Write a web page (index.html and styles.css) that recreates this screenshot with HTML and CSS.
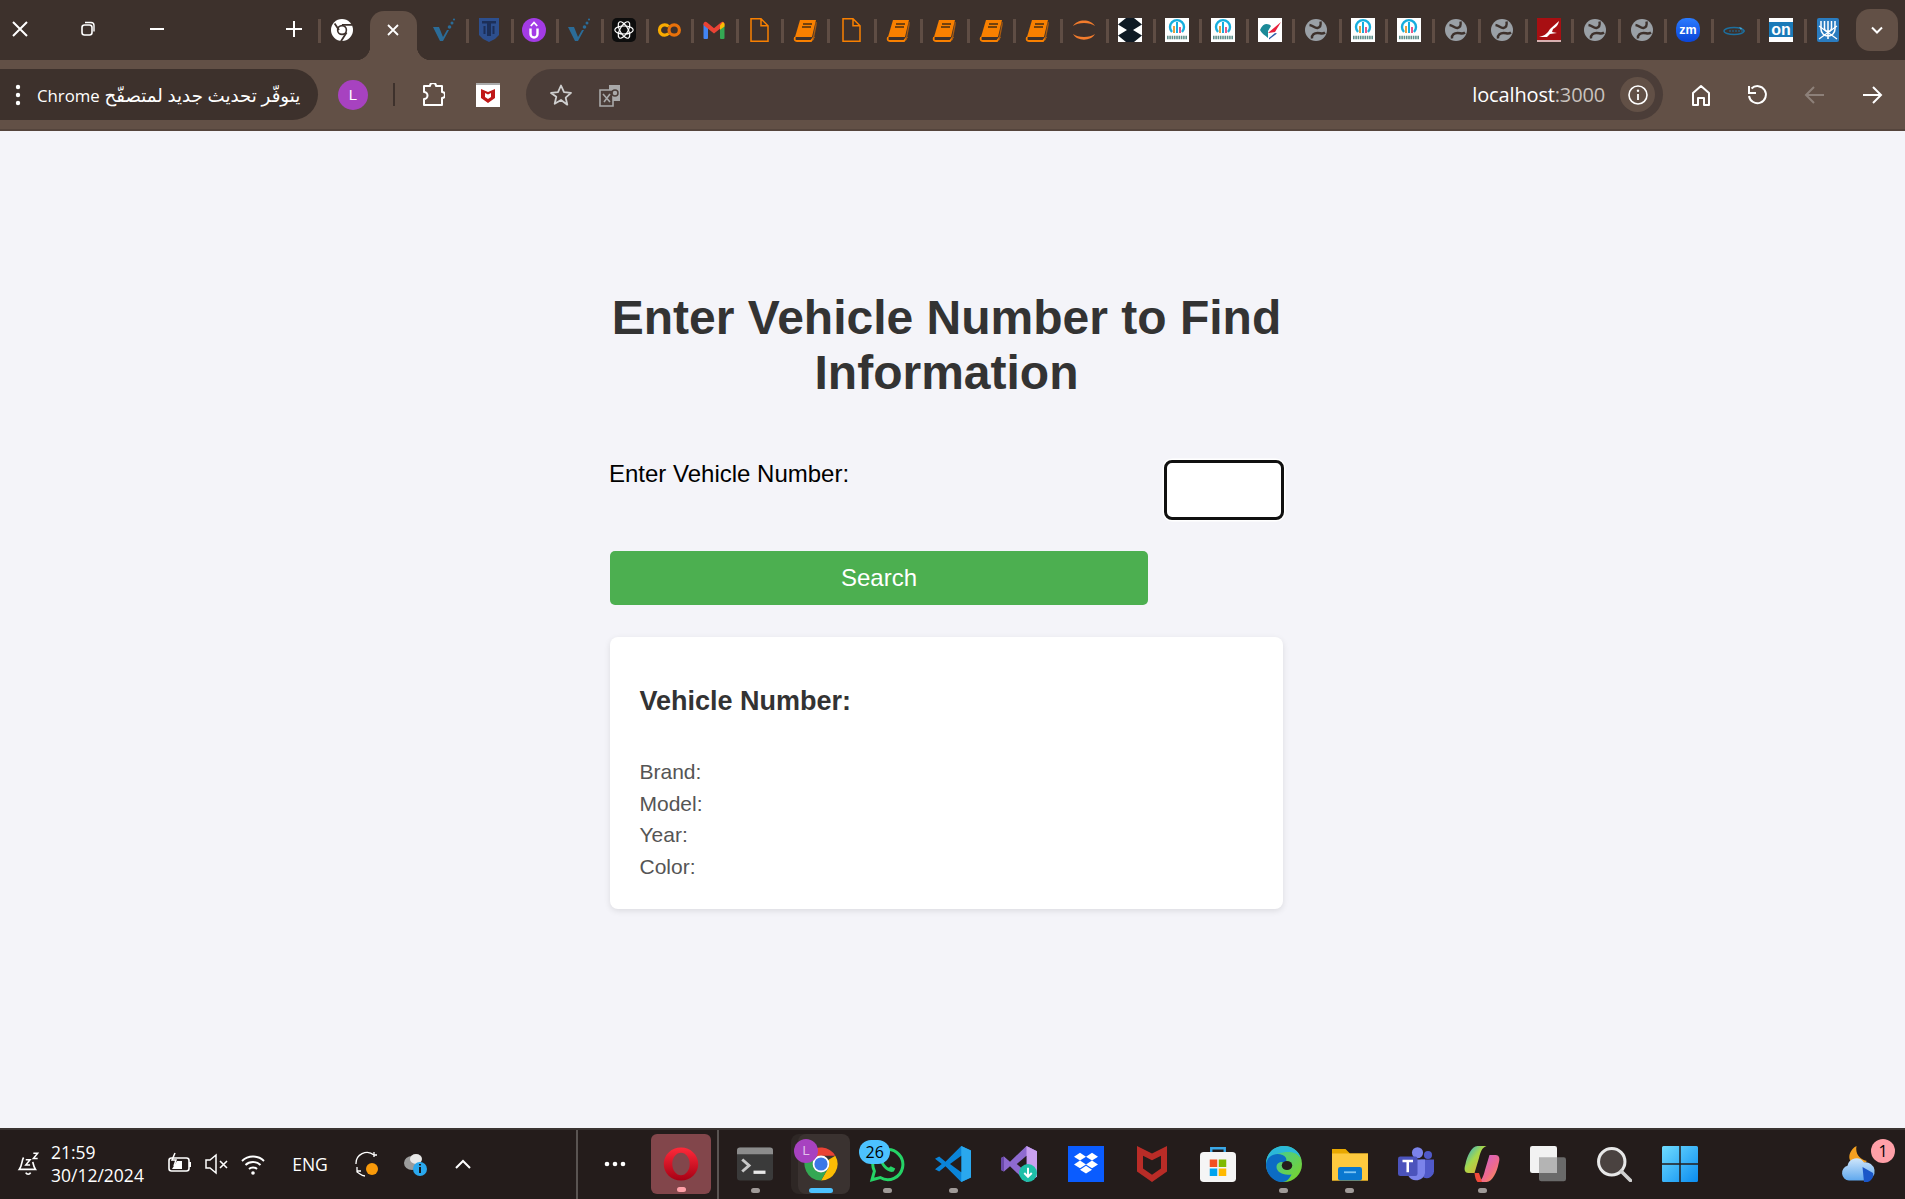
FILE: index.html
```html
<!DOCTYPE html>
<html lang="en">

<head>
    <meta charset="UTF-8">
    <meta name="viewport" content="width=device-width, initial-scale=1.0">
    <title>Vehicle Search</title>
    <link rel="stylesheet" href="styles.css">
</head>

<body>
    <!-- Shared icons -->
    <svg class="icon-defs" aria-hidden="true">
        <defs>
            <linearGradient id="g-win" x1="0" y1="0" x2="1" y2="1"><stop offset="0" stop-color="#6fdcff"/><stop offset="1" stop-color="#0a8cf0"/></linearGradient>
            <linearGradient id="g-edge" x1="0" y1="0" x2="1" y2="1"><stop offset="0" stop-color="#37c9b0"/><stop offset="1" stop-color="#7ed321"/></linearGradient>
            <linearGradient id="g-opera" x1="0" y1="0" x2="0" y2="1"><stop offset="0" stop-color="#ff2a3a"/><stop offset="1" stop-color="#a70014"/></linearGradient>
            <linearGradient id="g-copilot" x1="0" y1="0" x2="1" y2="1"><stop offset="0" stop-color="#1fa8e8"/><stop offset=".45" stop-color="#a8d84a"/><stop offset="1" stop-color="#f0a030"/></linearGradient>
            <linearGradient id="g-copilot2" x1="0" y1="0" x2="1" y2="1"><stop offset="0" stop-color="#c45fe8"/><stop offset=".6" stop-color="#f06a8a"/><stop offset="1" stop-color="#f8a040"/></linearGradient>
            <linearGradient id="g-cloud" x1="0" y1="0" x2="0" y2="1"><stop offset="0" stop-color="#cfe6fb"/><stop offset="1" stop-color="#5fa8ee"/></linearGradient>
            <linearGradient id="g-zm" x1="0" y1="0" x2="0" y2="1"><stop offset="0" stop-color="#2a7bff"/><stop offset="1" stop-color="#0b45d8"/></linearGradient>
        </defs>
        <symbol id="i-chrome-mono" viewBox="0 0 24 24">
            <circle cx="12" cy="12" r="11" fill="#fff"/>
            <circle cx="12" cy="12" r="5.2" fill="#3d312c"/>
            <circle cx="12" cy="12" r="3.6" fill="#fff"/>
            <path d="M4.600 5.500 9 12 M12 6.800H22 M16.600 14.600 11 23.200" stroke="#3d312c" stroke-width="1.800" fill="none"/>
        </symbol>
        <symbol id="i-vcheck" viewBox="0 0 24 24">
            <path d="M1 9h6l4 10 4-7h2l-6 11H8z" fill="#2b6c98"/>
            <circle cx="17.500" cy="9" r="1.800" fill="#2b6c98"/>
            <circle cx="20" cy="5" r="1.500" fill="#2b6c98"/>
            <circle cx="22" cy="1.500" r="1.100" fill="#2b6c98"/>
        </symbol>
        <symbol id="i-shield" viewBox="0 0 24 24">
            <path d="M2 0h20v17l-4 4-6 3-6-3-4-4z" fill="#2d4f8e"/>
            <path d="M5 3h14v2.500H14V18h-4V5.500H5z" fill="#1c2f58"/>
            <path d="M6.500 8h2v8h-2zM15.500 8h2v8h-2z" fill="#1c2f58"/>
        </symbol>
        <symbol id="i-upurple" viewBox="0 0 24 24">
            <circle cx="12" cy="12" r="12" fill="#a33be6"/>
            <path d="M8.500 10.500v5.500a3.500 3.500 0 0 0 7 0v-5.500" fill="none" stroke="#fff" stroke-width="2.400"/>
            <path d="M8.800 8 12 4.500l3.200 3.500" fill="none" stroke="#fff" stroke-width="1.800"/>
        </symbol>
        <symbol id="i-openai" viewBox="0 0 24 24">
            <rect width="24" height="24" rx="5" fill="#0d0d0d"/>
            <g fill="none" stroke="#fff" stroke-width="1.200">
                <ellipse cx="12" cy="12" rx="9.200" ry="4" />
                <ellipse cx="12" cy="12" rx="9.200" ry="4" transform="rotate(60 12 12)"/>
                <ellipse cx="12" cy="12" rx="9.200" ry="4" transform="rotate(120 12 12)"/>
            </g>
        </symbol>
        <symbol id="i-colab" viewBox="0 0 24 24">
            <circle cx="17.200" cy="12" r="5.200" fill="none" stroke="#e8710a" stroke-width="3.200"/>
            <path d="M11.500 8.500a5.200 5.200 0 1 0 0 7" fill="none" stroke="#f9ab00" stroke-width="3.200"/>
        </symbol>
        <symbol id="i-gmail" viewBox="0 0 24 24">
            <rect x="1.500" y="6" width="4.500" height="15" rx="1" fill="#4285f4"/>
            <rect x="18" y="6" width="4.500" height="15" rx="1" fill="#34a853"/>
            <path d="M3.500 6 12 12.800 20.500 6" fill="none" stroke="#ea4335" stroke-width="4.200" stroke-linecap="round"/>
            <path d="M18 7.500 20.500 4.300c1.300.2 2 1.200 2 2.500v1.600L18 11.800z" fill="#fbbc04"/>
        </symbol>
        <symbol id="i-doc" viewBox="0 0 24 24">
            <path d="M4 .800h10l7 7v15.400H4zM14 .800v7h7" fill="none" stroke="#f98000" stroke-width="1.500"/>
        </symbol>
        <symbol id="i-book" viewBox="0 0 24 24">
            <path d="M7 2h16l-4 17H2z" fill="#f98000"/>
            <path d="M2 19c-1 3 0 4 2 4h14l3-4" fill="none" stroke="#f98000" stroke-width="1.800"/>
            <path d="M10 6h9M9 9h9" stroke="#4a2e10" stroke-width="1.300"/>
            <path d="M23 4v3l-3 15" fill="none" stroke="#a85a10" stroke-width="1.300"/>
        </symbol>
        <symbol id="i-arc" viewBox="0 0 24 24">
            <path d="M1 8C5 .5 19 .5 23 8 18 4 6 4 1 8z" fill="#f47c2c"/>
            <path d="M1 16c4 7.500 18 7.500 22 0-5 4-17 4-22 0z" fill="#f47c2c"/>
        </symbol>
        <symbol id="i-diamonds" viewBox="0 0 24 24">
            <rect width="24" height="24" fill="#fff"/>
            <path d="M8 0h8l8 6.500-9 5.500H9L0 6.500zM9 12h6l9 5.500-8 6.500H8l-8-6.500z" fill="#0f1a24"/>
        </symbol>
        <symbol id="i-pie" viewBox="0 0 24 24">
            <rect width="24" height="24" fill="#fff"/>
            <path d="M7 14a7 7 0 1 1 10 0" fill="none" stroke="#16aede" stroke-width="2.400"/>
            <path d="M9 8v7" stroke="#e8a040" stroke-width="2"/>
            <path d="M12 4v11" stroke="#16aede" stroke-width="2"/>
            <path d="M15 9v6" stroke="#e85a88" stroke-width="2"/>
            <path d="M2 19.500h20" stroke="#5f8f8c" stroke-width="3.600" stroke-dasharray="1.600 .7"/>
        </symbol>
        <symbol id="i-flag" viewBox="0 0 24 24">
            <rect width="24" height="24" fill="#fff"/>
            <path d="M2 12C5 5 10 5 13 8l-3 5v7c-3-3-6-4-8-8z" fill="#1c8a98"/>
            <path d="M10 15 23 4l-6 10z" fill="#e8203a"/>
            <path d="M11 20l6-5 2 .5-8 6z" fill="#2a5aa8"/>
        </symbol>
        <symbol id="i-globe" viewBox="0 0 24 24">
            <circle cx="12" cy="12" r="11" fill="#9aa0a6"/>
            <path d="M5.500 7c4 .5 5 3.500 8 3s3.500-3.500 3-6.500M8 20.500c-.5-4 2.500-5.500 5.500-5.500s5 1.500 7.500-.5" fill="none" stroke="#3d312c" stroke-width="2.400"/>
        </symbol>
        <symbol id="i-redswoosh" viewBox="0 0 24 24">
            <rect width="24" height="24" fill="#a80f12"/>
            <path d="M2 19c5-1 7-3 9-5l2-3 9-8c-1 5-4 7-6 8l-1 3 5 1-7 1-3 3z" fill="#fff"/>
            <rect y="22" width="24" height="2" fill="#d8b0b0"/>
        </symbol>
        <symbol id="i-dart" viewBox="0 0 24 24">
            <ellipse cx="11" cy="13" rx="10" ry="3.500" fill="none" stroke="#1d6f9e" stroke-width="1.400"/>
            <path d="M6 13h16" stroke="#1d6f9e" stroke-width="1.200" stroke-dasharray="2 1"/>
            <path d="M16 9l3 1-1 2z" fill="#4aa8d8"/>
        </symbol>
        <symbol id="i-bituach" viewBox="0 0 24 24">
            <rect x="1" width="22" height="24" rx="2" fill="#2a7cc0"/>
            <path d="M5 3v8a7 7 0 0 0 14 0V3M8.500 3v7a3.500 3.500 0 0 0 7 0V3M12 3v18" fill="none" stroke="#fff" stroke-width="1.500"/>
            <path d="M3 21 21 8M3 8l18 13" stroke="#fff" stroke-width="1.200"/>
        </symbol>
        <symbol id="i-chrome" viewBox="0 0 24 24">
            <path d="M3.400 5.200A11 11 0 0 1 21.530 6.500H12A5.500 5.500 0 0 0 7.200 9.300z" fill="#ea4335"/>
            <path d="M21.530 6.500A11 11 0 0 1 12 23l4.760-8.250a5.500 5.500 0 0 0 0-5.500z" fill="#fbbc04"/>
            <path d="M12 23A11 11 0 0 1 3.400 5.200l3.800 4.100a5.500 5.500 0 0 0 9.560 5.450z" fill="#34a853"/>
            <circle cx="12" cy="12" r="5.600" fill="#fff"/>
            <circle cx="12" cy="12" r="4.400" fill="#3b78e7"/>
        </symbol>
        <symbol id="i-opera" viewBox="0 0 24 24">
            <path fill-rule="evenodd" d="M12 1C5.500 1 .5 6 .5 12S5.500 23 12 23s11.500-5 11.500-11S18.500 1 12 1zm0 3.500c3.200 0 5.800 3.300 5.800 7.500s-2.600 7.500-5.800 7.500-5.800-3.300-5.800-7.500 2.600-7.500 5.800-7.500z" fill="url(#g-opera)"/>
        </symbol>
        <symbol id="i-terminal" viewBox="0 0 24 24">
            <rect width="24" height="22" y="1" rx="2" fill="#3a3a3a"/>
            <path d="M0 3a2 2 0 0 1 2-2h20a2 2 0 0 1 2 2v2.500H0z" fill="#8c8c8c"/>
            <path d="M3.500 9l4.500 4-4.500 4" fill="none" stroke="#c8c8c8" stroke-width="2"/>
            <path d="M11 17.500h8" stroke="#e8e8e8" stroke-width="2.200"/>
        </symbol>
        <symbol id="i-whatsapp" viewBox="0 0 24 24">
            <path d="M2 22.500l1.600-5.700A10 10 0 1 1 7.500 21z" fill="none" stroke="#25d366" stroke-width="2"/>
            <path d="M8.500 7.500c-1.500 1.500-1 4 1 6.500s5 4 7 3l1-2-3-1.500-1.200 1c-1.500-.5-3-2.200-3.500-3.500l1-1.200L9.800 7z" fill="#25d366"/>
        </symbol>
        <symbol id="i-vscode" viewBox="0 0 24 24">
            <path d="M17.500 0 24 3v18l-6.500 3L7 13.500 2.800 17 0 15.500 4.500 12 0 8.500 2.800 7 7 10.500z" fill="#0a84d8"/>
            <path d="M17.500 0 24 3v18l-6.500 3z" fill="#2aa8ee"/>
            <path d="M17.500 6.500v11L10 12z" fill="#241c1b"/>
        </symbol>
        <symbol id="i-vs" viewBox="0 0 24 24">
            <path d="M17 0l7 3.500v17L17 24 6 13.500 2 17l-2-1V8l2-1 4 3.500z" fill="#8e6ad0"/>
            <path d="M17 0l7 3.500v17L17 24z" fill="#c9a0f0"/>
            <path d="M17 6.500v11L10.500 12z" fill="#241c1b"/>
            <path d="M0 8l2-1v10l-2-1z" fill="#6a4aa8"/>
            <circle cx="18" cy="18" r="6" fill="#1ebfa8"/>
            <path d="M18 14.500v6M15.500 18l2.500 2.600 2.500-2.600" fill="none" stroke="#fff" stroke-width="1.300"/>
        </symbol>
        <symbol id="i-dropbox" viewBox="0 0 24 24">
            <rect width="24" height="24" fill="#0a5cff"/>
            <path d="M8 4.500l4 2.600-4 2.600-4-2.600zM16 4.500l4 2.600-4 2.600-4-2.600zM8 9.700l4 2.600-4 2.600-4-2.600zM16 9.700l4 2.600-4 2.600-4-2.600zM8 15.800l4-2.600 4 2.600-4 2.600z" fill="#fff"/>
        </symbol>
        <symbol id="i-mcafee" viewBox="0 0 24 24">
            <path d="M2 0l10 5 10-5v17l-10 7-10-7z" fill="#b92c27"/>
            <path d="M6 6.500l6 3 6-3v8.500l-6 4.200L6 15z" fill="#241c1b"/>
        </symbol>
        <symbol id="i-store" viewBox="0 0 24 24">
            <path d="M7.500 5V1.500h9V5" fill="none" stroke="#3aa8e8" stroke-width="1.600"/>
            <rect y="4" width="24" height="20" rx="2.500" fill="#f5f5f5"/>
            <rect x="6.500" y="9" width="5" height="5" fill="#f25022"/>
            <rect x="12.500" y="9" width="5" height="5" fill="#7fba00"/>
            <rect x="6.500" y="15" width="5" height="5" fill="#00a4ef"/>
            <rect x="12.500" y="15" width="5" height="5" fill="#ffb900"/>
        </symbol>
        <symbol id="i-edge" viewBox="0 0 24 24">
            <circle cx="12" cy="12" r="12" fill="url(#g-edge)"/>
            <path d="M0 12C0 5 5 0 12 0c5 0 10 3 11 8-2-3-5-4-8-4C7 4 1 8 0 12z" fill="#2bb8d8"/>
            <path d="M0 12c1-6 7-8 11-6 3 1 3 4 2 5-3-1-6 0-6 3s4 6 10 5c-1 2-3 5-6 5C5 24 0 19 0 12z" fill="#0c6cc4"/>
            <ellipse cx="14" cy="13" rx="3.500" ry="3" fill="#241c1b"/>
        </symbol>
        <symbol id="i-folder" viewBox="0 0 24 24">
            <path d="M0 2h9l3 3h12v18H0z" fill="#e8a800"/>
            <rect y="5" width="24" height="18" fill="#fdc93e"/>
            <rect x="4" y="14" width="16" height="9" rx="1.500" fill="#0a78d0"/>
            <path d="M8 17.500h8" stroke="#7cc4f4" stroke-width="1.200"/>
        </symbol>
        <symbol id="i-teams" viewBox="0 0 24 24">
            <circle cx="13" cy="4.500" r="3.700" fill="#7b83eb"/>
            <circle cx="20" cy="6" r="2.700" fill="#5059c9"/>
            <path d="M15 9h9v8a5 5 0 0 1-7 4z" fill="#5059c9"/>
            <path d="M7 9h11v9a6 6 0 0 1-11 2z" fill="#7b83eb"/>
            <rect y="7" width="13" height="13" rx="1.500" fill="#4b53bc"/>
            <path d="M3 10h7M6.500 10v7.500" stroke="#fff" stroke-width="1.700"/>
        </symbol>
        <symbol id="i-copilot" viewBox="0 0 24 24">
            <path d="M9 0h6c-3 1-4 4-5 8l-3 10H3c-3 0-3-3-2-6 1-5 4-12 8-12z" fill="url(#g-copilot)"/>
            <path d="M15 24H9c3-1 4-4 5-8l3-10h4c3 0 3 3 2 6-1 5-4 12-8 12z" fill="url(#g-copilot2)"/>
            <path d="M7 18h3l2 6H9c-1-1-1.700-3-2-6z" fill="#f04a3a"/>
        </symbol>
        <symbol id="i-taskview" viewBox="0 0 24 24">
            <rect x="6" y="7.500" width="18" height="16" rx="1.500" fill="#6a6a6a"/>
            <rect width="18" height="18" rx="1.500" fill="#f2f2f2"/>
            <rect x="6" y="7.500" width="12" height="10.500" fill="#b4b4b4"/>
        </symbol>
        <symbol id="i-search" viewBox="0 0 24 24">
            <circle cx="10.500" cy="10.500" r="8.800" fill="#4a4240" stroke="#e8e8e8" stroke-width="2"/>
            <path d="M16.800 16.800 23 23" stroke="#d0d0d0" stroke-width="2.400" stroke-linecap="round"/>
        </symbol>
        <symbol id="i-windows" viewBox="0 0 24 24">
            <path d="M1 0h10.500v11.500H0V1a1 1 0 0 1 1-1zM12.500 0H23a1 1 0 0 1 1 1v10.500H12.500zM0 12.500h11.500V24H1a1 1 0 0 1-1-1zM12.500 12.500H24V23a1 1 0 0 1-1 1H12.500z" fill="url(#g-win)"/>
        </symbol>
        <symbol id="i-weather" viewBox="0 0 24 24">
            <path d="M11 0c-1 5 2 9 7 10-3 3-8 3-11 0C5 7 7 2 11 0z" fill="#f4a020"/>
            <path d="M6 23a5 5 0 0 1-1-9.800A6 6 0 0 1 16 11a5.500 5.500 0 0 1 2 12z" fill="url(#g-cloud)"/>
            <path d="M15 14l7 4a5 5 0 0 1-6 6z" fill="#1a56c8"/>
        </symbol>
    </svg>

    <!-- Browser tab strip -->
    <div class="tabstrip">
        <div class="window-controls">
            <button class="win-btn" aria-label="Close">
                <svg width="20" height="20" viewBox="0 0 20 20"><path d="M3 3l14 14M17 3 3 17" stroke="#fff" stroke-width="2"/></svg>
            </button>
            <button class="win-btn" aria-label="Restore">
                <svg width="20" height="20" viewBox="0 0 20 20"><rect x="3" y="6" width="10" height="10" rx="2.500" fill="none" stroke="#fff" stroke-width="1.600"/><path d="M6 3.500h6a3 3 0 0 1 3 3v6" fill="none" stroke="#fff" stroke-width="1.400"/></svg>
            </button>
            <button class="win-btn" aria-label="Minimize">
                <svg width="20" height="20" viewBox="0 0 20 20"><path d="M3 10h14" stroke="#fff" stroke-width="2"/></svg>
            </button>
        </div>
        <button class="win-btn new-tab" aria-label="New tab">
            <svg width="20" height="20" viewBox="0 0 20 20"><path d="M2 10h16M10 2v16" stroke="#fff" stroke-width="2"/></svg>
        </button>
        <div class="tab"><svg class="favicon"><use href="#i-chrome-mono"/></svg></div>
        <div class="tab tab-active">
            <svg width="16" height="16" viewBox="0 0 16 16"><path d="M3 3l10 10M13 3 3 13" stroke="#fff" stroke-width="1.800"/></svg>
        </div>
        <div class="tab tab-narrow tab-first"><svg class="favicon"><use href="#i-vcheck"/></svg></div>
        <div class="tab tab-narrow"><svg class="favicon"><use href="#i-shield"/></svg></div>
        <div class="tab tab-narrow"><svg class="favicon"><use href="#i-upurple"/></svg></div>
        <div class="tab tab-narrow"><svg class="favicon"><use href="#i-vcheck"/></svg></div>
        <div class="tab tab-narrow"><svg class="favicon"><use href="#i-openai"/></svg></div>
        <div class="tab tab-narrow"><svg class="favicon"><use href="#i-colab"/></svg></div>
        <div class="tab tab-narrow"><svg class="favicon"><use href="#i-gmail"/></svg></div>
        <div class="tab tab-narrow"><svg class="favicon"><use href="#i-doc"/></svg></div>
        <div class="tab"><svg class="favicon"><use href="#i-book"/></svg></div>
        <div class="tab"><svg class="favicon"><use href="#i-doc"/></svg></div>
        <div class="tab"><svg class="favicon"><use href="#i-book"/></svg></div>
        <div class="tab"><svg class="favicon"><use href="#i-book"/></svg></div>
        <div class="tab"><svg class="favicon"><use href="#i-book"/></svg></div>
        <div class="tab"><svg class="favicon"><use href="#i-book"/></svg></div>
        <div class="tab"><svg class="favicon"><use href="#i-arc"/></svg></div>
        <div class="tab"><svg class="favicon"><use href="#i-diamonds"/></svg></div>
        <div class="tab"><svg class="favicon"><use href="#i-pie"/></svg></div>
        <div class="tab"><svg class="favicon"><use href="#i-pie"/></svg></div>
        <div class="tab"><svg class="favicon"><use href="#i-flag"/></svg></div>
        <div class="tab"><svg class="favicon"><use href="#i-globe"/></svg></div>
        <div class="tab"><svg class="favicon"><use href="#i-pie"/></svg></div>
        <div class="tab"><svg class="favicon"><use href="#i-pie"/></svg></div>
        <div class="tab"><svg class="favicon"><use href="#i-globe"/></svg></div>
        <div class="tab"><svg class="favicon"><use href="#i-globe"/></svg></div>
        <div class="tab"><svg class="favicon"><use href="#i-redswoosh"/></svg></div>
        <div class="tab"><svg class="favicon"><use href="#i-globe"/></svg></div>
        <div class="tab"><svg class="favicon"><use href="#i-globe"/></svg></div>
        <div class="tab">
            <svg class="favicon" viewBox="0 0 24 24"><rect width="24" height="24" rx="10" fill="url(#g-zm)"/><text x="12" y="16" class="icon-text zm-text" text-anchor="middle">zm</text></svg>
        </div>
        <div class="tab"><svg class="favicon"><use href="#i-dart"/></svg></div>
        <div class="tab">
            <svg class="favicon" viewBox="0 0 24 24"><rect width="24" height="24" fill="#fff"/><rect y="4" width="24" height="15" fill="#1a7ab8"/><text x="12" y="17" class="icon-text on-text" text-anchor="middle">on</text></svg>
        </div>
        <div class="tab"><svg class="favicon"><use href="#i-bituach"/></svg></div>
        <button class="tab-search" aria-label="Search tabs">
            <svg width="16" height="16" viewBox="0 0 16 16"><path d="M3 5.500l5 5 5-5" fill="none" stroke="#fff" stroke-width="2"/></svg>
        </button>
    </div>

    <!-- Browser toolbar -->
    <div class="toolbar">
        <div class="update-pill">
            <svg class="update-dots" width="6" height="24" viewBox="0 0 6 24"><circle cx="3" cy="4" r="2.200" fill="#fff"/><circle cx="3" cy="12" r="2.200" fill="#fff"/><circle cx="3" cy="20" r="2.200" fill="#fff"/></svg>
            <span class="update-text" dir="rtl">يتوفّر تحديث جديد لمتصفّح <span class="update-brand">Chrome</span></span>
        </div>
        <div class="avatar">L</div>
        <div class="toolbar-sep"></div>
        <svg class="tool-icon puzzle" viewBox="0 0 24 24"><path d="M3 3h6a3 3 0 0 1 6 0h6v6a3 3 0 0 1 0 6v7H3v-6a3 3 0 0 0 0-7z" fill="none" stroke="#fff" stroke-width="2" stroke-linejoin="round"/></svg>
        <svg class="tool-icon mcafee-ext" viewBox="0 0 24 24"><rect width="24" height="24" fill="#fff"/><rect width="24" height="2" fill="#aaa"/><path d="M5 6l7 3 7-3v9l-7 5-7-5z" fill="#c01818"/><path d="M9 10l3 1.500L15 10v4l-3 2-3-2z" fill="#fff"/></svg>
        <div class="omnibox">
            <svg class="tool-icon star" viewBox="0 0 24 24"><path d="M12 2.500l3 6.700 7 .7-5.300 4.800 1.600 7L12 17l-6.300 3.700 1.600-7L2 9.900l7-.7z" fill="none" stroke="#cfcfcf" stroke-width="1.800" stroke-linejoin="round"/></svg>
            <svg class="tool-icon translate" viewBox="0 0 24 24"><path d="M11 2h11v16H11z" fill="#a9a9a9"/><path d="M2 7h13v16H2z" fill="#4b3d38" stroke="#a9a9a9" stroke-width="1.600"/><path d="M5 11l7 8M12 11l-6 8" stroke="#a9a9a9" stroke-width="1.600"/><circle cx="17" cy="10" r="3" fill="none" stroke="#4b3d38" stroke-width="1.500"/></svg>
            <div class="address"><span class="host">localhost</span><span class="port">:3000</span></div>
            <div class="site-info">
                <svg width="22" height="22" viewBox="0 0 22 22"><circle cx="11" cy="11" r="9" fill="none" stroke="#fff" stroke-width="1.600"/><path d="M11 10v6" stroke="#fff" stroke-width="1.800"/><circle cx="11" cy="6.800" r="1.200" fill="#fff"/></svg>
            </div>
        </div>
        <svg class="nav-icon nav-home" viewBox="0 0 24 24"><path d="M4 22V10l8-7 8 7v12h-5v-7H9v7z" fill="none" stroke="#fff" stroke-width="2" stroke-linejoin="round"/></svg>
        <svg class="nav-icon nav-reload" viewBox="0 0 24 24"><path d="M6.500 5.500A8.500 8.500 0 1 1 4 13" fill="none" stroke="#fff" stroke-width="2"/><path d="M4 3v7h7" fill="none" stroke="#fff" stroke-width="2"/></svg>
        <svg class="nav-icon nav-back" viewBox="0 0 24 24"><path d="M21 12H4M11 4l-8 8 8 8" fill="none" stroke="#8d8079" stroke-width="2"/></svg>
        <svg class="nav-icon nav-forward" viewBox="0 0 24 24"><path d="M3 12h17M13 4l8 8-8 8" fill="none" stroke="#fff" stroke-width="2"/></svg>
    </div>

    <!-- Page content -->
    <main class="page">
        <div class="container">
            <h1>Enter Vehicle Number to Find Information</h1>
            <form class="search-form">
                <div class="form-row">
                    <label for="vehicle">Enter Vehicle Number:</label>
                    <input type="text" id="vehicle">
                </div>
                <button type="submit" class="search-button">Search</button>
            </form>
            <div class="result-card">
                <h3>Vehicle Number:</h3>
                <p>Brand:</p>
                <p>Model:</p>
                <p>Year:</p>
                <p>Color:</p>
            </div>
        </div>
    </main>

    <!-- Windows taskbar -->
    <footer class="taskbar">
        <div class="tray">
            <div class="tray-item tray-bell">
                <svg width="26" height="26" viewBox="0 0 24 24"><path d="M7 6c-2 3-1 7-4 11h15c-2-3-2-5-2.500-7" fill="none" stroke="#fff" stroke-width="1.500"/><path d="M9 20a2.500 2.500 0 0 0 4.500 0" fill="none" stroke="#fff" stroke-width="1.500"/><path d="M9 8h4l-4 5h4M16 2h4l-4 5h4" fill="none" stroke="#fff" stroke-width="1.400"/></svg>
            </div>
            <div class="clock">
                <span>21:59</span>
                <span>30/12/2024</span>
            </div>
            <div class="tray-item tray-battery">
                <svg width="26" height="26" viewBox="0 0 26 26"><rect x="2" y="7" width="20" height="13" rx="2.500" fill="none" stroke="#fff" stroke-width="1.600"/><path d="M23 11v5" stroke="#fff" stroke-width="2"/><path d="M5 18l5-8h5v8z" fill="#fff"/><path d="M8 2 5 9h4l-2 6" fill="none" stroke="#fff" stroke-width="1.500"/></svg>
            </div>
            <div class="tray-item tray-mute">
                <svg width="26" height="26" viewBox="0 0 26 26"><path d="M2 9h4l6-5v18l-6-5H2z" fill="none" stroke="#fff" stroke-width="1.500"/><path d="M16 10l7 7M23 10l-7 7" stroke="#fff" stroke-width="1.600"/></svg>
            </div>
            <div class="tray-item tray-wifi">
                <svg width="26" height="26" viewBox="0 0 26 26"><path d="M2 10c6-6 16-6 22 0M5.500 14c4-4 11-4 15 0M9 18c2-2 6-2 8 0" fill="none" stroke="#fff" stroke-width="1.900"/><circle cx="13" cy="22" r="1.800" fill="#fff"/></svg>
            </div>
            <div class="tray-item tray-lang">ENG</div>
            <div class="tray-item tray-sync">
                <svg width="26" height="26" viewBox="0 0 26 26"><path d="M2 13A11 11 0 0 1 20 4l3 0M20 1v5" fill="none" stroke="#fff" stroke-width="1.300"/><path d="M3 20h4M3 16v5l3 2a11 11 0 0 0 5 2" fill="none" stroke="#fff" stroke-width="1.300"/><circle cx="18" cy="18" r="6" fill="#f99a0a"/></svg>
            </div>
            <div class="tray-item tray-cloud">
                <svg width="26" height="26" viewBox="0 0 26 26"><ellipse cx="10" cy="12" rx="8" ry="7" fill="#9c9c9c"/><ellipse cx="14" cy="8" rx="6" ry="5" fill="#e8e8e8"/><circle cx="18" cy="18" r="7" fill="#2aa8ee"/><path d="M18 16v6M18 13v1.500" stroke="#1a1a1a" stroke-width="2"/></svg>
            </div>
            <div class="tray-item tray-caret">
                <svg width="18" height="12" viewBox="0 0 18 12"><path d="M2 10l7-7 7 7" fill="none" stroke="#fff" stroke-width="2"/></svg>
            </div>
        </div>
        <div class="overflow-dots">
            <svg width="24" height="6" viewBox="0 0 24 6"><circle cx="4" cy="3" r="2.300" fill="#fff"/><circle cx="12" cy="3" r="2.300" fill="#fff"/><circle cx="20" cy="3" r="2.300" fill="#fff"/></svg>
        </div>
        <div class="app app-opera"><svg class="app-icon"><use href="#i-opera"/></svg><span class="pip pip-pink"></span></div>
        <div class="app-divider"></div>
        <div class="app"><svg class="app-icon"><use href="#i-terminal"/></svg><span class="pip"></span></div>
        <div class="app app-chrome">
            <svg class="app-icon"><use href="#i-chrome"/></svg>
            <span class="chrome-badge">L</span>
            <span class="pip pip-active"></span>
        </div>
        <div class="app">
            <svg class="app-icon"><use href="#i-whatsapp"/></svg>
            <span class="whatsapp-badge">26</span>
            <span class="pip"></span>
        </div>
        <div class="app"><svg class="app-icon"><use href="#i-vscode"/></svg><span class="pip"></span></div>
        <div class="app"><svg class="app-icon"><use href="#i-vs"/></svg></div>
        <div class="app"><svg class="app-icon"><use href="#i-dropbox"/></svg></div>
        <div class="app"><svg class="app-icon"><use href="#i-mcafee"/></svg></div>
        <div class="app"><svg class="app-icon"><use href="#i-store"/></svg></div>
        <div class="app"><svg class="app-icon"><use href="#i-edge"/></svg><span class="pip"></span></div>
        <div class="app"><svg class="app-icon"><use href="#i-folder"/></svg><span class="pip"></span></div>
        <div class="app"><svg class="app-icon"><use href="#i-teams"/></svg></div>
        <div class="app"><svg class="app-icon"><use href="#i-copilot"/></svg><span class="pip"></span></div>
        <div class="app"><svg class="app-icon"><use href="#i-taskview"/></svg></div>
        <div class="app"><svg class="app-icon"><use href="#i-search"/></svg></div>
        <div class="app"><svg class="app-icon"><use href="#i-windows"/></svg></div>
        <div class="weather">
            <svg class="app-icon"><use href="#i-weather"/></svg>
            <span class="weather-badge">1</span>
        </div>
    </footer>
</body>

</html>
```

FILE: styles.css
```css
* {
    box-sizing: border-box;
}

body {
    font-family: "Liberation Sans", Arial, sans-serif;
    margin: 0;
    padding: 0;
    height: 1199px;
    overflow: hidden;
    display: flex;
    flex-direction: column;
    background-color: #f4f4f9;
    color: #333;
}

.icon-defs {
    display: block;
    width: 0;
    height: 0;
    overflow: hidden;
}

.icon-text {
    font-family: "Liberation Sans", Arial, sans-serif;
    font-weight: bold;
    fill: #fff;
}

.zm-text {
    font-size: 12.5px;
}

.on-text {
    font-size: 16px;
}

button {
    border: none;
    background: none;
    padding: 0;
    cursor: pointer;
}

/* Tab strip */
.tabstrip {
    height: 60px;
    flex: none;
    display: flex;
    align-items: stretch;
    background-color: #3d312c;
}

.window-controls {
    display: flex;
    gap: 28.5px;
}

.win-btn {
    width: 40px;
    height: 58px;
    display: flex;
    align-items: center;
    justify-content: center;
}

.new-tab {
    margin-left: 97px;
    margin-right: 5px;
}

.tab {
    width: 46.5px;
    flex: none;
    position: relative;
    display: flex;
    align-items: center;
    justify-content: center;
}

.tab-narrow {
    width: 45px;
}

.tab::before {
    content: "";
    position: absolute;
    left: -1px;
    top: 19px;
    width: 3px;
    height: 24px;
    background-color: #5f4d44;
}

.tab-first::before {
    display: none;
}

.favicon {
    width: 24px;
    height: 24px;
}

.tab-active {
    width: 47px;
    margin: 11px 5px 0 4px;
    padding-bottom: 11px;
    background-color: #625046;
    border-radius: 14px 14px 0 0;
}

.tab-active::before,
.tab-active::after {
    content: "";
    position: absolute;
    bottom: 0;
    top: auto;
    width: 14px;
    height: 14px;
    background-color: transparent;
}

.tab-active::before {
    left: -14px;
    background-image: radial-gradient(circle at 0 0, transparent 14px, #625046 14.5px);
}

.tab-active::after {
    right: -14px;
    background-image: radial-gradient(circle at 100% 0, transparent 14px, #625046 14.5px);
}

.tab-search {
    width: 42px;
    height: 42px;
    margin: 9px 0 0 5px;
    border-radius: 14px;
    background-color: #625046;
    display: flex;
    align-items: center;
    justify-content: center;
}

/* Toolbar */
.toolbar {
    height: 71px;
    flex: none;
    display: flex;
    align-items: center;
    background-color: #625046;
    border-bottom: 2px solid #54443c;
}

.update-pill {
    width: 318px;
    height: 51px;
    display: flex;
    align-items: center;
    padding-left: 15px;
    gap: 16px;
    background-color: #3d312c;
    border-radius: 0 26px 26px 0;
    color: #fff;
}

.update-text {
    font-family: "Open Sans", "DejaVu Sans", sans-serif;
    font-size: 18.2px;
    white-space: nowrap;
}

.update-brand {
    font-size: 16.8px;
}

.avatar {
    width: 30px;
    height: 30px;
    margin-left: 20px;
    border-radius: 50%;
    background-color: #a742c0;
    color: #fff;
    font-size: 15px;
    line-height: 30px;
    text-align: center;
}

.toolbar-sep {
    width: 2px;
    height: 23px;
    margin-left: 25px;
    background-color: #3d312c;
}

.tool-icon {
    width: 24px;
    height: 24px;
    flex: none;
}

.puzzle {
    margin-left: 26px;
}

.mcafee-ext {
    margin-left: 30.5px;
}

.omnibox {
    width: 1137px;
    height: 51px;
    margin-left: 26.5px;
    display: flex;
    align-items: center;
    padding-left: 23px;
    background-color: #4b3d38;
    border-radius: 26px;
}

.translate {
    margin-left: 25px;
}

.address {
    margin-left: auto;
    font-family: "Open Sans", sans-serif;
    font-size: 20px;
    letter-spacing: -0.15px;
}

.host {
    color: #fff;
}

.port {
    color: #c9c2be;
}

.site-info {
    width: 35px;
    height: 35px;
    margin: 0 8px 0 15px;
    display: flex;
    align-items: center;
    justify-content: center;
    border-radius: 50%;
    background-color: #625046;
}

.nav-icon {
    width: 24px;
    height: 24px;
    flex: none;
}

.nav-home {
    margin-left: 26px;
}

.nav-reload {
    margin-left: 32px;
}

.nav-back {
    margin-left: 34px;
}

.nav-forward {
    margin-left: 32.5px;
}

/* Page */
.page {
    flex: 1;
    padding: 159px 12px 0 0;
    display: flex;
    justify-content: center;
}

.container {
    width: 673px;
}

h1 {
    margin: 0;
    font-size: 48px;
    line-height: 55px;
    text-align: center;
    color: #333;
}

.form-row {
    margin: 60px -1px 0 -1px;
    display: flex;
    justify-content: space-between;
    align-items: flex-start;
}

label {
    font-size: 24px;
    line-height: 28px;
    color: #000;
}

input {
    width: 120px;
    height: 60px;
    border: 3px solid #101010;
    border-radius: 8px;
    background-color: white;
    box-shadow: 0 0 0 1.5px #fff;
}

.search-button {
    display: block;
    width: 538px;
    height: 54px;
    margin-top: 31px;
    background-color: #4caf50;
    color: white;
    font-family: inherit;
    font-size: 24px;
    border-radius: 5px;
}

.result-card {
    margin-top: 32px;
    padding: 49px 30px 27px 29.5px;
    background-color: white;
    border-radius: 8px;
    box-shadow: 0 2px 6px rgba(0, 0, 0, 0.1);
}

.result-card h3 {
    margin: 0 0 39px;
    font-size: 27px;
    line-height: 31px;
    color: #333;
}

.result-card p {
    margin: 0;
    font-size: 21px;
    line-height: 31.5px;
    color: #555;
}

/* Taskbar */
.taskbar {
    height: 71px;
    flex: none;
    display: flex;
    align-items: center;
    padding-bottom: 2px;
    background-color: #241c1b;
    border-top: 2px solid #3a3432;
    color: #fff;
}

.tray {
    width: 578px;
    height: 69px;
    margin-bottom: -2px;
    flex: none;
    display: flex;
    align-items: center;
    padding-bottom: 2px;
    border-right: 2px solid #5a5452;
}

.tray-item {
    height: 100%;
    display: flex;
    align-items: center;
    justify-content: center;
}

.tray-bell {
    width: 44px;
    margin-left: 7px;
}

.clock {
    width: 110px;
    display: flex;
    flex-direction: column;
    gap: 1px;
    font-family: "Open Sans", sans-serif;
    font-size: 17.5px;
    line-height: 22px;
}

.tray-battery {
    width: 38px;
}

.tray-mute {
    width: 35px;
}

.tray-wifi {
    width: 38px;
}

.tray-lang {
    width: 76px;
    font-family: "Open Sans", sans-serif;
    font-size: 17.5px;
}

.tray-sync {
    width: 38px;
}

.tray-cloud {
    width: 58px;
}

.tray-caret {
    width: 38px;
}

.overflow-dots {
    width: 73px;
    display: flex;
    justify-content: center;
}

.app {
    width: 66.1px;
    height: 100%;
    flex: none;
    position: relative;
    display: flex;
    align-items: center;
    justify-content: center;
}

.app-icon {
    width: 36px;
    height: 36px;
}

.app-opera {
    width: 60px;
    height: 60px;
    border-radius: 6px;
    background-color: #82464b;
}

.app-divider {
    width: 2px;
    height: 69px;
    margin: 0 3px -2px 6px;
    background-color: #5a5452;
    flex: none;
}

.pip {
    position: absolute;
    bottom: 4px;
    left: 50%;
    width: 9px;
    height: 5px;
    margin-left: -4.5px;
    border-radius: 3px;
    background-color: #a09a98;
}

.pip-pink {
    background-color: #ffa0a8;
    bottom: 2px;
}

.pip-active {
    width: 24px;
    margin-left: -12px;
    background-color: #4cc2ff;
}

.app-chrome::before {
    content: "";
    position: absolute;
    left: 10px;
    right: 4px;
    top: 4px;
    bottom: 3px;
    border-radius: 8px;
    background-color: #3a3230;
    box-shadow: -7px 0 0 #2e2725;
}

.app-chrome .app-icon {
    position: relative;
}

.chrome-badge {
    position: absolute;
    left: 6px;
    top: 9px;
    width: 24px;
    height: 24px;
    border-radius: 50%;
    background-color: #a742c0;
    color: #e0c0ea;
    font-size: 13px;
    line-height: 24px;
    text-align: center;
}

.whatsapp-badge {
    position: absolute;
    left: 5px;
    top: 10px;
    width: 31px;
    height: 24px;
    border-radius: 12px;
    background-color: #4cc2ff;
    color: #000;
    font-family: "Open Sans", sans-serif;
    font-size: 16px;
    line-height: 24px;
    text-align: center;
}

.weather {
    margin-left: auto;
    margin-right: 29px;
    position: relative;
    display: flex;
}

.weather-badge {
    position: absolute;
    right: -19px;
    top: -7px;
    width: 24px;
    height: 24px;
    border-radius: 50%;
    background-color: #ffa0a8;
    color: #000;
    font-family: "Open Sans", sans-serif;
    font-size: 16px;
    line-height: 24px;
    text-align: center;
}
```
